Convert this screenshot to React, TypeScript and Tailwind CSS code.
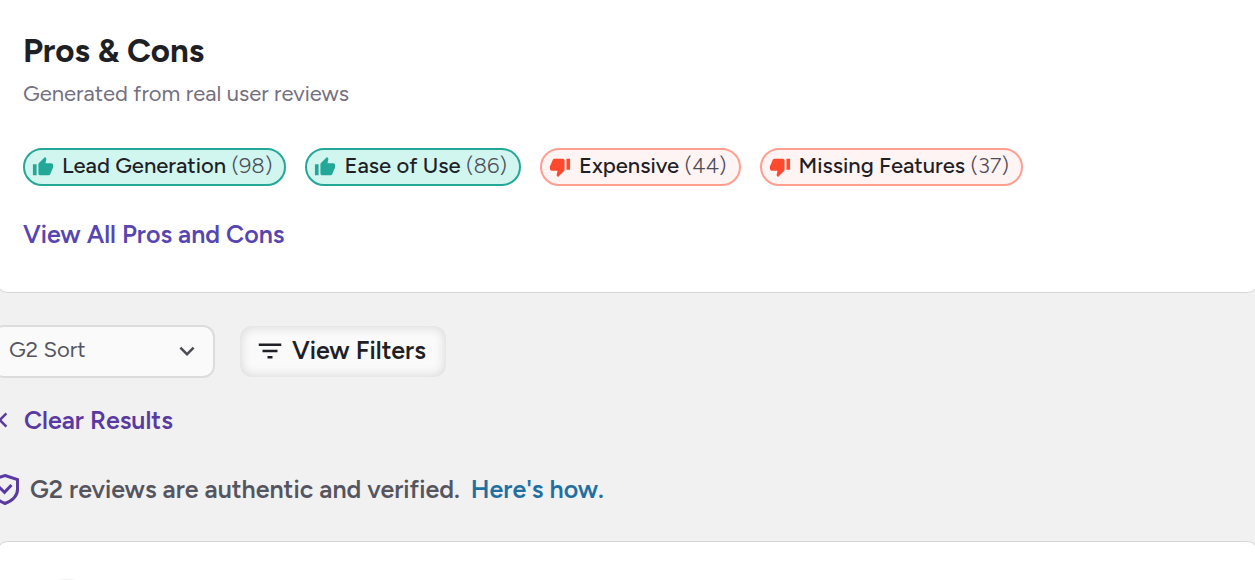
import type { ReactNode } from "react";
import {
  MdChevronLeft,
  MdExpandMore,
  MdFilterList,
  MdThumbDown,
  MdThumbUp,
} from "react-icons/md";

type Sentiment = "pro" | "con";

interface Topic {
  label: string;
  count: number;
  sentiment: Sentiment;
}

const topics: Topic[] = [
  { label: "Lead Generation", count: 98, sentiment: "pro" },
  { label: "Ease of Use", count: 86, sentiment: "pro" },
  { label: "Expensive", count: 44, sentiment: "con" },
  { label: "Missing Features", count: 37, sentiment: "con" },
];

function TopicPill({ label, count, sentiment }: Topic) {
  const isPro = sentiment === "pro";
  return (
    <button
      type="button"
      className={
        isPro
          ? "flex h-[38px] items-center gap-2 rounded-full border-2 border-[#23a897] bg-[#d1f6f0] pr-3 pl-[7px]"
          : "flex h-[38px] items-center gap-2 rounded-full border-2 border-[#ff9f90] bg-[#fff4f4] pr-3 pl-[7px]"
      }
    >
      {isPro ? (
        <MdThumbUp className="size-[22px] text-[#23a897]" aria-hidden="true" />
      ) : (
        <MdThumbDown className="size-[22px] text-[#ff492c]" aria-hidden="true" />
      )}
      <span className="pb-0.5 text-[22px] leading-7 font-medium whitespace-nowrap text-[#1f1f26]">
        {label} <span className="font-light text-[#4e4e58]">({count})</span>
      </span>
    </button>
  );
}

function ShieldCheck() {
  return (
    <svg
      viewBox="0 0 28 32"
      className="h-8 w-7 shrink-0 text-[#5a39a2]"
      fill="none"
      stroke="currentColor"
      strokeWidth="3"
      aria-hidden="true"
    >
      <path d="M14 2.500 26.500 6.500v10c0 7-5 11-12.500 14C6.500 27.500 1.500 23.500 1.500 16.500v-10L14 2.500Z" />
      <path d="m8 14 5.500 5.300 7-7.300" />
    </svg>
  );
}

function Card({ children, className }: { children: ReactNode; className: string }) {
  return (
    <section className={`-mx-1 border border-[#d6d6d6] bg-white px-[26px] ${className}`}>
      {children}
    </section>
  );
}

export default function App() {
  return (
    <main className="flex h-screen flex-col overflow-hidden bg-[#f1f1f1] font-['Figtree','Inter','Liberation_Sans',sans-serif]">
      <Card className="rounded-b-xl border-t-0 pt-8 pb-[42px]">
        <h2 className="text-[33px] leading-[38px] font-bold text-[#1f1f26]">Pros &amp; Cons</h2>
        <p className="mt-2 text-[22px] leading-8 text-[#746f80]">
          Generated from real user reviews
        </p>
        <div className="mt-[38px] flex flex-wrap gap-[19px]">
          {topics.map((topic) => (
            <TopicPill key={topic.label} {...topic} />
          ))}
        </div>
        <a
          href="#pros-and-cons"
          className="mt-8 inline-block text-[25px] leading-8 font-[560] text-[#5746b2]"
        >
          View All Pros and Cons
        </a>
      </Card>

      <div className="mt-8 flex items-center gap-[25px]">
        <div className="relative -ml-2 w-[223px]">
          <select
            aria-label="Sort reviews"
            className="block h-[53px] w-full appearance-none rounded-xl border-2 border-[#dcdcdc] bg-[#fafafa] pr-12 pb-1 pl-[15px] text-[22px] text-[#55555f]"
          >
            <option>G2 Sort</option>
          </select>
          <MdExpandMore
            className="pointer-events-none absolute top-[11px] right-[13px] size-[30px] text-[#4b4b55]"
            aria-hidden="true"
          />
        </div>
        <button
          type="button"
          className="flex h-[51px] items-center gap-[7px] rounded-xl bg-[#fafafa] pr-5 pb-0.5 pl-[15px] text-[25px] font-[560] text-[#1f1f26] shadow-[inset_0_0_10px_2px_#dcdcdc]"
        >
          <MdFilterList className="size-[30px]" aria-hidden="true" />
          View Filters
        </button>
      </div>

      <a
        href="#reviews"
        className="mt-[26px] -ml-3 flex items-center gap-1.5 self-start text-[25px] leading-8 font-[560] text-[#5a39a2]"
      >
        <MdChevronLeft className="size-[30px]" aria-hidden="true" />
        Clear Results
      </a>

      <p className="mt-[37px] -ml-[9px] flex items-center gap-[11px] text-[25px] leading-8 font-[560] text-[#55555f]">
        <ShieldCheck />
        <span>G2 reviews are authentic and verified.</span>
        <a href="#verification" className="text-[#1f6fa0]">
          Here's how.
        </a>
      </p>

      <Card className="mt-9 min-h-0 flex-1 overflow-hidden rounded-t-xl border-b-0 pt-[37px]">
        <div className="size-[88px] rounded-full bg-[#f1f1f1]" />
      </Card>
    </main>
  );
}
